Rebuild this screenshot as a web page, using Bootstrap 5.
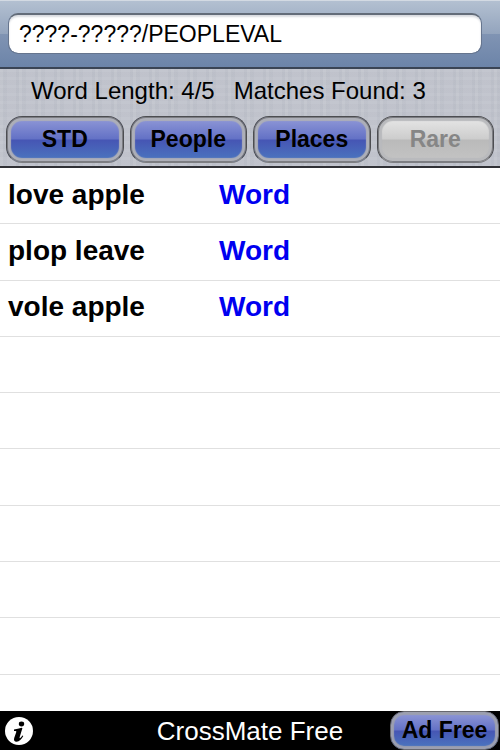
<!DOCTYPE html>
<html lang="en">
<head>
<meta charset="utf-8">
<meta name="viewport" content="width=device-width, initial-scale=1">
<title>CrossMate Free</title>
<link href="https://cdn.jsdelivr.net/npm/bootstrap@5.3.0/dist/css/bootstrap.min.css" rel="stylesheet">
<style>
  body { font-family: "Liberation Sans", Arial, sans-serif; color: #000; background: #fff; }
  .search-bar {
    padding: 12px 18px 13px 8px;
    background: linear-gradient(#b3c0d1 0, #93a4bd 50%, #8094b3 50%, #6c84a9 100%);
    border-top: 1px solid #d3dae3;
    border-bottom: 2px solid #3a4454;
  }
  .search-bar .form-control {
    height: 41px; padding: 0 10px;
    font-size: 23px; line-height: 28px; color: #000;
    border: 1px solid #66758e; border-top: 2px solid #636c79; border-radius: 10px;
    box-shadow: inset 0 2px 2px #d8dbe0;
  }
  .filter-panel {
    padding: 5px 6px 3px;
    background-color: #bfc2cb;
    background-image:
      repeating-linear-gradient(90deg, #ffffff10 0 3px, #80889806 3px 7px, #ffffff0a 7px 16px, #8088980a 16px 19px),
      repeating-linear-gradient(#ffffff08 0 3px, #80889806 3px 8px);
    border-bottom: 2px solid #303136;
  }
  .stats { font-size: 24px; line-height: 34px; gap: 19px; padding-left: 25px; }
  .glossy {
    padding: 0; font-size: 23px; line-height: 36px; font-weight: bold; color: #000;
    border: 1px solid #4c4d51; border-bottom-color: #7d7e82; border-radius: 16px;
    background: linear-gradient(#929ad8 0, #6472c6 48%, #4656b4 52%, #4b78c0 100%);
    box-shadow: inset 0 0 0 1px #7c7d82, inset 0 0 1px 4px #adafb8;
  }
  .glossy:hover { color: #000; }
  .filters .glossy { padding: 4px 0 5px; }
  .filters { gap: 6px; }
  .glossy:disabled {
    color: #868686; opacity: 1; border-color: #4c4d51; border-bottom-color: #7d7e82;
    background: linear-gradient(#e8e8e8 0, #cdcdcd 48%, #bababa 52%, #c4c4c4 100%);
    box-shadow: inset 0 0 0 1px #7c7d82, inset 0 0 1px 4px #b9babd;
  }
  .results .list-group-item {
    flex: 56 1 0; min-height: 36px; padding: 0 8px 2px;
    font-size: 28px; line-height: 34px; font-weight: bold; color: #000;
    border-color: #e0e0e0;
  }
  .results .list-group-item:last-child { flex-grow: 36; }
  .entry { width: 211px; }
  .kind { color: #0000f0; }
  .bottom-bar { display: grid; grid-template-columns: 110px 1fr 110px; align-items: center; height: 39px; background: #000; color: #fff; }
  .app-title { font-size: 26px; line-height: 38px; font-weight: 400; }
  .info-btn { width: 28px; height: 28px; margin-left: 5px; }
  .bottom-bar .glossy {
    border-color: #66676f; border-radius: 14px; line-height: 37px;
    box-shadow: inset 0 0 1px 3px #9c9faf; margin-right: 1px;
  }
</style>
</head>
<body>
<div class="d-flex flex-column min-vh-100">
  <header class="search-bar">
    <input type="text" class="form-control" aria-label="Search pattern" value="????-?????/PEOPLEVAL">
  </header>
  <section class="filter-panel">
    <div class="stats d-flex">
      <span>Word Length: 4/5</span>
      <span>Matches Found: 3</span>
    </div>
    <div class="filters d-flex pt-2">
      <button type="button" class="btn glossy flex-fill w-25">STD</button>
      <button type="button" class="btn glossy flex-fill w-25">People</button>
      <button type="button" class="btn glossy flex-fill w-25">Places</button>
      <button type="button" class="btn glossy flex-fill w-25" disabled>Rare</button>
    </div>
  </section>
  <main class="d-flex flex-column flex-grow-1">
    <ul class="results list-group list-group-flush flex-grow-1">
      <li class="list-group-item d-flex align-items-center"><span class="entry">love apple</span><span class="kind">Word</span></li>
      <li class="list-group-item d-flex align-items-center"><span class="entry">plop leave</span><span class="kind">Word</span></li>
      <li class="list-group-item d-flex align-items-center"><span class="entry">vole apple</span><span class="kind">Word</span></li>
      <li class="list-group-item"></li>
      <li class="list-group-item"></li>
      <li class="list-group-item"></li>
      <li class="list-group-item"></li>
      <li class="list-group-item"></li>
      <li class="list-group-item"></li>
      <li class="list-group-item"></li>
    </ul>
  </main>
  <footer class="bottom-bar">
    <button type="button" class="info-btn btn p-0 border-0 d-flex" aria-label="Info">
      <svg width="28" height="28" viewBox="0 0 28 28" aria-hidden="true">
        <circle cx="14" cy="14" r="14" fill="#fff"/>
        <ellipse cx="16.500" cy="7" rx="2.700" ry="2.400" fill="#000"/>
        <path d="M9 12.600C11.500 12.300 14 11.600 16.800 10.800L17.400 11.200L14.700 20C14.400 21.400 14.900 21.400 15.600 20.700C16.300 20 16.800 19.300 17.300 18.500L18.300 19.100C16.500 22.500 14.300 24.700 11.600 24.700C9.300 24.700 8.600 23 9.200 20.900L11.300 14.900C11.500 14.100 11 13.900 9 14Z" fill="#000"/>
      </svg>
    </button>
    <h1 class="app-title text-center m-0">CrossMate Free</h1>
    <button type="button" class="btn glossy">Ad Free</button>
  </footer>
</div>
<script src="https://cdn.jsdelivr.net/npm/bootstrap@5.3.0/dist/js/bootstrap.bundle.min.js"></script>
</body>
</html>
